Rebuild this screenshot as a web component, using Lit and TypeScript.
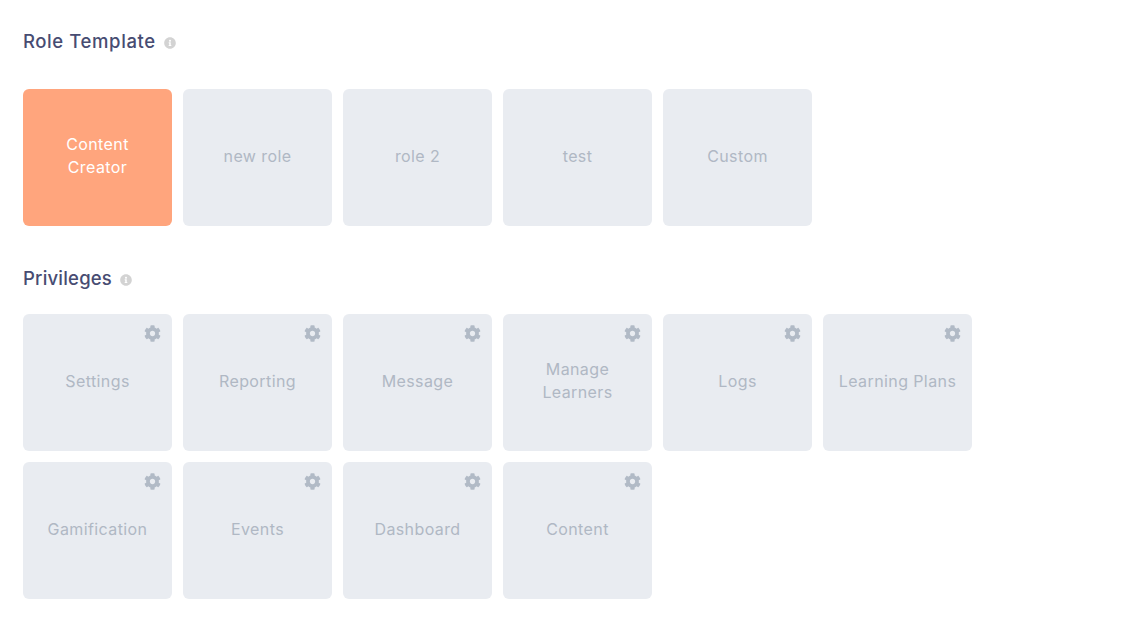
import { LitElement, html, css, svg } from 'lit';
import { customElement } from 'lit/decorators.js';

const GEAR = svg`<path d="M487.4 315.7l-42.6-24.6c4.3-23.2 4.3-47 0-70.2l42.6-24.6c4.9-2.8 7.1-8.6 5.5-14-11.1-35.6-30-67.8-54.7-94.6-3.8-4.1-10-5.1-14.8-2.3L380.8 110c-17.9-15.4-38.5-27.3-60.8-35.1V25.8c0-5.6-3.9-10.5-9.4-11.7-36.7-8.2-74.3-7.8-109.2 0-5.5 1.2-9.4 6.1-9.4 11.7V75c-22.2 7.9-42.8 19.8-60.8 35.1L88.7 85.5c-4.9-2.8-11-1.9-14.8 2.3-24.7 26.7-43.6 58.9-54.7 94.6-1.7 5.4.6 11.2 5.5 14L67.3 221c-4.3 23.2-4.3 47 0 70.2l-42.6 24.6c-4.9 2.8-7.1 8.6-5.5 14 11.1 35.6 30 67.8 54.7 94.6 3.8 4.1 10 5.1 14.8 2.3l42.6-24.6c17.9 15.4 38.5 27.3 60.8 35.1v49.2c0 5.6 3.9 10.5 9.4 11.7 36.7 8.2 74.3 7.8 109.2 0 5.5-1.2 9.4-6.1 9.4-11.7v-49.2c22.2-7.9 42.8-19.8 60.8-35.1l42.6 24.6c4.9 2.8 11 1.9 14.8-2.3 24.7-26.7 43.6-58.9 54.7-94.6 1.5-5.5-.7-11.3-5.6-14.1zM256 336c-44.1 0-80-35.9-80-80s35.9-80 80-80 80 35.9 80 80-35.9 80-80 80z"/>`;
const INFO = svg`<path d="M256 8C119.043 8 8 119.083 8 256c0 136.997 111.043 248 248 248s248-111.003 248-248C504 119.083 392.957 8 256 8zm0 110c23.196 0 42 18.804 42 42s-18.804 42-42 42-42-18.804-42-42 18.804-42 42-42zm56 254c0 6.627-5.373 12-12 12h-88c-6.627 0-12-5.373-12-12v-24c0-6.627 5.373-12 12-12h12v-64h-12c-6.627 0-12-5.373-12-12v-24c0-6.627 5.373-12 12-12h64c6.627 0 12 5.373 12 12v100h12c6.627 0 12 5.373 12 12v24z"/>`;

const ROLES = ['Content\nCreator', 'new role', 'role 2', 'test', 'Custom'];
const PRIVILEGES = [
  'Settings',
  'Reporting',
  'Message',
  'Manage\nLearners',
  'Logs',
  'Learning Plans',
  'Gamification',
  'Events',
  'Dashboard',
  'Content',
];

@customElement('app-root')
export class AppRoot extends LitElement {
  static get styles() {
    return css`
      :host {
        display: block;
        height: 642px;
        box-sizing: border-box;
        padding: 30px 23px 0;
        background: #fff;
        font-family: 'Inter', 'Open Sans', sans-serif;
      }

      .heading {
        display: flex;
        align-items: center;
        gap: 8px;
        height: 22px;
        font-size: 18.5px;
        font-weight: 500;
        letter-spacing: 0.2px;
        color: #474c72;
      }

      .heading.wide {
        letter-spacing: 0.6px;
      }

      .heading svg {
        width: 12px;
        height: 12px;
        margin-top: 3px;
        fill: #d3d3d3;
      }

      .roles {
        margin: 37px 0 41px;
      }

      .privileges {
        margin-top: 25px;
      }

      .grid {
        display: grid;
        grid-template-columns: repeat(6, 149px);
        grid-auto-rows: 137px;
        gap: 11px;
      }

      .card {
        position: relative;
        display: flex;
        align-items: center;
        justify-content: center;
        box-sizing: border-box;
        padding-bottom: 3px;
        border-radius: 6px;
        background: #e9ecf1;
        color: #b0b8c4;
        font-size: 16px;
        line-height: 23px;
        letter-spacing: 0.4px;
        text-align: center;
        white-space: pre-line;
      }

      .card.active {
        background: #ffa57d;
        color: #fff;
      }

      .gear {
        position: absolute;
        top: 11px;
        right: 11px;
        width: 17px;
        height: 17px;
        fill: #b1bac6;
      }
    `;
  }

  render() {
    return html`
      <div class="heading wide">
        Role Template
        <svg viewBox="0 0 512 512">${INFO}</svg>
      </div>
      <div class="grid roles">
        ${ROLES.map(
          (role, i) => html`<div class="card ${i === 0 ? 'active' : ''}">${role}</div>`
        )}
      </div>
      <div class="heading">
        Privileges
        <svg viewBox="0 0 512 512">${INFO}</svg>
      </div>
      <div class="grid privileges">
        ${PRIVILEGES.map(
          (name) => html`
            <div class="card">
              ${name}
              <svg class="gear" viewBox="0 0 512 512">${GEAR}</svg>
            </div>
          `
        )}
      </div>
    `;
  }
}
